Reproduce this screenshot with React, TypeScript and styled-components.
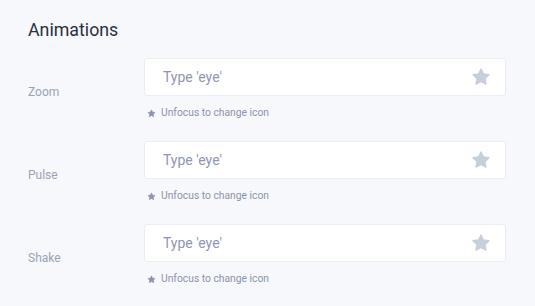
import React from 'react';
import styled, { createGlobalStyle } from 'styled-components';

const GlobalStyle = createGlobalStyle`
  html, body {
    margin: 0;
    padding: 0;
    background: #f7f8fc;
    font-family: Roboto, 'Liberation Sans', sans-serif;
  }
`;

const Page = styled.div`
  padding: 19px 0 0 28px;
  width: 535px;
  height: 306px;
  box-sizing: border-box;
`;

const Title = styled.h2`
  margin: 0 0 18px;
  font-size: 17.8px;
  font-weight: 400;
  line-height: 21px;
  color: #2a2f3f;
`;

const Rows = styled.div`
  display: flex;
  flex-direction: column;
  gap: 21px;
`;

const Row = styled.div`
  display: grid;
  grid-template-columns: 116px 362px;
`;

const Label = styled.label`
  padding-top: 27px;
  font-size: 12px;
  line-height: 14px;
  color: #9ba2b8;
`;

const Field = styled.div`
  display: flex;
  flex-direction: column;
`;

const InputBox = styled.div`
  display: flex;
  align-items: center;
  height: 38px;
  box-sizing: border-box;
  padding: 0 14px 0 18px;
  background: #fff;
  border: 1px solid #eaedf3;
  border-radius: 3px;
`;

const Input = styled.input`
  flex: 1;
  border: none;
  outline: none;
  background: transparent;
  font-family: inherit;
  font-size: 14px;
  color: #2a2f3f;
  padding: 0;

  &::placeholder {
    color: #8e97b1;
  }
`;

const Hint = styled.div`
  display: flex;
  align-items: center;
  gap: 5px;
  margin-top: 10px;
  padding-left: 3px;
  font-size: 10.3px;
  line-height: 14px;
  color: #8b93ad;
`;

function Star({ size, fill }: { size: number; fill: string }) {
  return (
    <svg width={size} height={size} viewBox="0 0 24 24">
      <path
        d="M12 2.3l2.95 6.1 6.65.9-4.85 4.65 1.2 6.6L12 17.35 6.05 20.55l1.2-6.6L2.4 9.3l6.65-.9z"
        fill={fill}
        stroke={fill}
        strokeWidth="1.6"
        strokeLinejoin="round"
      />
    </svg>
  );
}

const animations = ['Zoom', 'Pulse', 'Shake'];

export default function App() {
  return (
    <>
      <GlobalStyle />
      <Page>
        <Title>Animations</Title>
        <Rows>
          {animations.map((name) => (
            <Row key={name}>
              <Label>{name}</Label>
              <Field>
                <InputBox>
                  <Input placeholder="Type 'eye'" />
                  <Star size={20} fill="#c6cfda" />
                </InputBox>
                <Hint>
                  <Star size={9} fill="#8b93ad" />
                  Unfocus to change icon
                </Hint>
              </Field>
            </Row>
          ))}
        </Rows>
      </Page>
    </>
  );
}
